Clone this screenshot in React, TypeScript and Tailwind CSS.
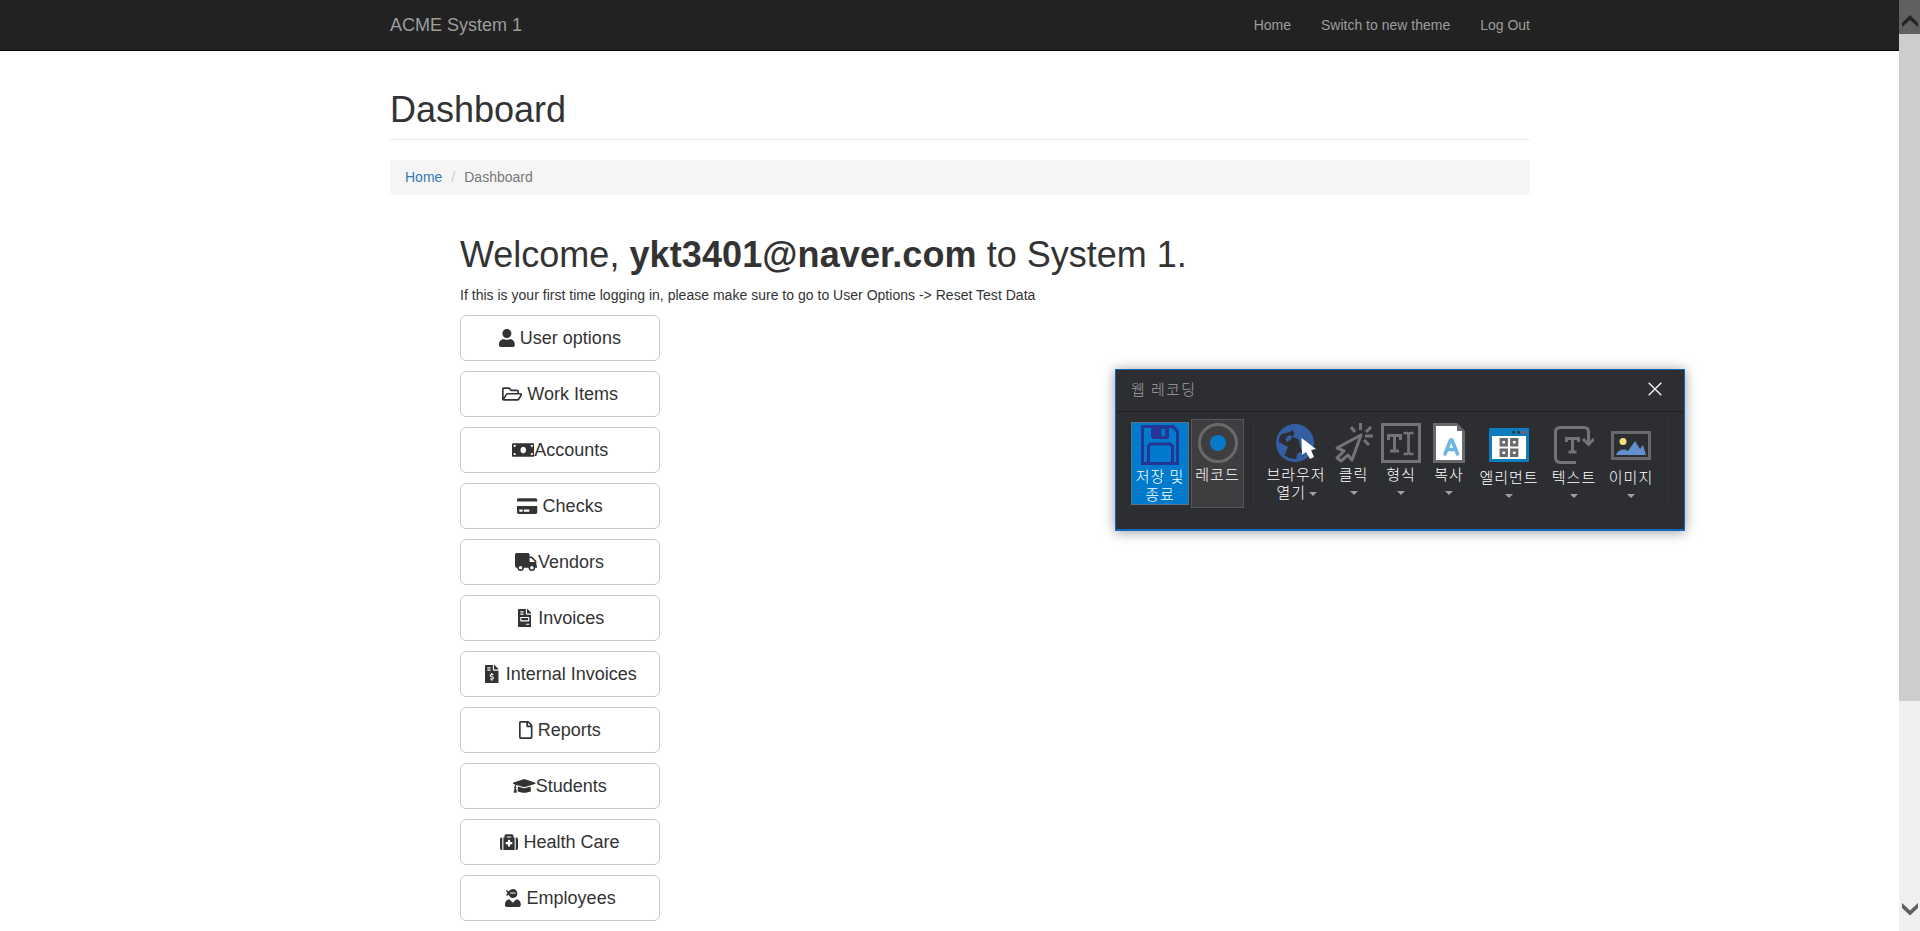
import type { ReactNode } from 'react';
import type { IconType } from 'react-icons';
import {
  FaUser,
  FaRegFolderOpen,
  FaMoneyBill,
  FaCreditCard,
  FaTruck,
  FaFileInvoice,
  FaFileInvoiceDollar,
  FaRegFile,
  FaGraduationCap,
  FaMedkit,
  FaUserNinja,
} from 'react-icons/fa';

type MenuEntry = { label: string; icon: IconType; iconClass: string };

const menu: MenuEntry[] = [
  { label: 'User options', icon: FaUser, iconClass: 'w-[15.75px] mr-[5px]' },
  { label: 'Work Items', icon: FaRegFolderOpen, iconClass: 'w-[20.25px] mr-[5px]' },
  { label: 'Accounts', icon: FaMoneyBill, iconClass: 'w-[22.5px]' },
  { label: 'Checks', icon: FaCreditCard, iconClass: 'w-[20.25px] mr-[5px]' },
  { label: 'Vendors', icon: FaTruck, iconClass: 'w-[22.5px] -ml-px mr-[0.5px]' },
  { label: 'Invoices', icon: FaFileInvoice, iconClass: 'w-[13.5px] ml-[2px] mr-[7px]' },
  { label: 'Internal Invoices', icon: FaFileInvoiceDollar, iconClass: 'w-[13.5px] ml-[2px] mr-[7px]' },
  { label: 'Reports', icon: FaRegFile, iconClass: 'w-[13.5px] mr-[5px]' },
  { label: 'Students', icon: FaGraduationCap, iconClass: 'w-[22.5px]' },
  { label: 'Health Care', icon: FaMedkit, iconClass: 'w-[18px] mr-[5px]' },
  { label: 'Employees', icon: FaUserNinja, iconClass: 'w-[15.75px] ml-[1px] mr-[5.5px]' },
];

function Navbar() {
  return (
    <nav className="h-[51px] w-full border-b border-[#080808] bg-[#222]">
      <div className="mx-auto flex h-[50px] w-[1140px] items-center justify-between text-[#9d9d9d]">
        <a className="text-[18px] leading-5">ACME System 1</a>
        <div className="flex gap-[30px] text-sm leading-5">
          <a>Home</a>
          <a>Switch to new theme</a>
          <a>Log Out</a>
        </div>
      </div>
    </nav>
  );
}

function MenuButton({ entry }: { entry: MenuEntry }) {
  const Icon = entry.icon;
  return (
    <button className="flex h-[46px] w-[200px] items-center justify-center rounded-md border border-[#ccc] bg-white text-[18px] leading-6 whitespace-nowrap text-[#333]">
      <Icon className={'h-[18px] shrink-0 ' + entry.iconClass} />
      {entry.label}
    </button>
  );
}

function Arrow({ className = '' }: { className?: string }) {
  return (
    <svg className={className} width="8" height="4" viewBox="0 0 8 4">
      <path d="M0 0H8L4 4Z" fill="#a0a0a2" />
    </svg>
  );
}

function Tool({ className, labelClass, label, children }: { className: string; labelClass: string; label: string; children: ReactNode }) {
  return (
    <div className={'flex shrink-0 flex-col items-center ' + className}>
      {children}
      <div className={'h-[18px] whitespace-nowrap ' + labelClass}>{label}</div>
      <Arrow className="mt-[8px]" />
    </div>
  );
}

function Recorder() {
  return (
    <div className="absolute top-[369px] left-[1115px] h-[162px] w-[570px] border border-b-2 border-[#1267bd] bg-[#2d2e32] font-['Noto_Sans_CJK_KR','Noto_Sans_CJK_SC',sans-serif] text-[15px] leading-[18px] font-light tracking-[1px] text-white shadow-[0_1px_12px_rgba(0,0,0,0.4)]">
      <div className="flex h-[42px] items-center justify-between border-b border-[#232323] pr-[22px] pl-[15px]">
        <span className="pb-[4px] tracking-[1.4px] text-[#a0a0a0]">웹 레코딩</span>
        <svg className="mb-[3px]" width="14" height="14" viewBox="0 0 14 14" fill="none" stroke="#f4f4f4" strokeWidth="1.4">
          <path d="M.7.7 13.3 13.3M13.3.7.7 13.3" />
        </svg>
      </div>
      <div className="flex items-start pt-[7px] pl-[15px]">
        <div className="mt-[3px] flex h-[83px] w-[58px] flex-col items-center border border-[#5d7488] bg-[#007acc] pt-[2px]">
          <svg width="38" height="40" viewBox="0 0 38 40" fill="none" stroke="#253594" strokeWidth="3">
            <path d="M1.5 1.5H32L36.5 6.5V38.500H1.500Z" />
            <path d="M7.500 38V21L9.500 19H29L31.500 21V38" />
            <path d="M10 1H28V13L27 14H12L10 12Z" fill="#253594" stroke="none" />
            <path d="M20.500 4H24V11H20.500Z" fill="#007acc" stroke="none" />
          </svg>
          <div className="mt-[2px] whitespace-nowrap">저장 및</div>
          <div className="whitespace-nowrap">종료</div>
        </div>
        <div className="ml-[2px] flex h-[89px] w-[53px] flex-col items-center border border-[#55565b] bg-[#3e3e40] pt-[3px]">
          <svg width="40" height="40" viewBox="0 0 40 40">
            <circle cx="20" cy="20" r="18.500" fill="none" stroke="#69696b" strokeWidth="3" />
            <circle cx="20" cy="20" r="8" fill="#0879c9" />
          </svg>
          <div className="mt-[2px] whitespace-nowrap">레코드</div>
        </div>
        <div className="ml-[9px] h-[85px] w-px bg-[#35363a]" />
        <div className="ml-[11px] flex w-[62px] flex-col items-center pt-[4px]">
          <svg width="40" height="40" viewBox="0 0 40 40">
            <circle cx="19" cy="20" r="19" fill="#345fa3" />
            <path
              d="M4 13 6 11 10 10 14 9 16 7 18 9 18 12 16 14 20 15 23 17 24 23 26 28 28 30 27 34 20 36 13 35 8 32 4 27 3 21 3 16Z"
              fill="#2d2e32"
            />
            <path d="M2 19 5 20 8 22 12 24 10 28 9 32 5 30 2 25ZM12 13 15 12 16 15 14 17 11 19 9 16ZM21 31 24 29 27 31 26 36 20 37Z" fill="#345fa3" />
            <path d="M25.500 15 26 32 30 29 34 36 38 34 35 27 40 26Z" fill="#fff" />
          </svg>
          <div className="mt-[2px] whitespace-nowrap">브라우저</div>
          <div className="flex items-center gap-[3px] self-end pr-[10px] whitespace-nowrap">
            열기<Arrow className="mt-[3px]" />
          </div>
        </div>
        <Tool className="ml-[6px] w-[41px] pt-[4px]" labelClass="mt-[2px]" label="클릭">
          <svg width="38" height="40" viewBox="0 0 38 40" fill="none" stroke="#747477" strokeWidth="3">
            <path d="M26 12 2 25 9 28 2 35 6 38 13 32 17 37Z" strokeLinejoin="round" />
            <path d="M25.500 0V7M16 4 20 9M36 4 31 9M30 13H38M29 17 34 22" />
          </svg>
        </Tool>
        <Tool className="ml-[7px] w-[40px] pt-[4px]" labelClass="mt-[2px]" label="형식">
          <svg width="40" height="40" viewBox="0 0 40 40" fill="none" stroke="#747477" strokeWidth="3">
            <path d="M1.500 1.500H38.500V38.500H1.500Z" />
            <path d="M7.500 17V12.500H19.500V17M13.500 12V28M9 28H18" strokeWidth="3" />
            <path d="M22.500 10H26L27.500 11.500 29 10H32.500M27.500 11V29M22.500 31H26L27.500 29.500 29 31H32.500" strokeWidth="2.700" />
          </svg>
        </Tool>
        <Tool className="ml-[8px] w-[40px] pt-[4px]" labelClass="mt-[2px]" label="복사">
          <svg width="32" height="40" viewBox="0 0 32 40">
            <path d="M0 0H24L32 8V40H0Z" fill="#68696b" />
            <path d="M3 3H24V8H29V37H3Z" fill="#fff" />
            <path d="M12 31 17.500 17H19L24.500 31M14 26.500H23" fill="none" stroke="#6db6df" strokeWidth="3.500" strokeLinecap="round" strokeLinejoin="round" />
          </svg>
        </Tool>
        <Tool className="ml-[9px] w-[62px] pt-[9px]" labelClass="mt-[6px]" label="엘리먼트">
          <svg width="40" height="34" viewBox="0 0 40 34">
            <rect width="40" height="34" rx="1" fill="#0d7dbd" />
            <path d="M3 8H37V31H3Z" fill="#fff" />
            <circle cx="24.500" cy="4.200" r="1.500" fill="#293642" />
            <circle cx="29.500" cy="4.200" r="1.500" fill="#293642" />
            <circle cx="34.500" cy="4.200" r="1.600" fill="#dc3d54" />
            <path d="M12 11.500H17.500V17H12ZM22.500 11.500H28V17H22.500ZM12 22H17.500V27.500H12ZM22.500 22H28V27.500H22.500Z" fill="none" stroke="#68696b" strokeWidth="2.800" />
          </svg>
        </Tool>
        <Tool className="ml-[9px] w-[50px] pt-[7px]" labelClass="mt-[4px]" label="텍스트">
          <svg width="40" height="38" viewBox="0 0 40 38" fill="none" stroke="#747477" strokeWidth="3">
            <path d="M22 36.500H6.500Q1.500 36.500 1.500 31V6Q1.500 1.500 6.500 1.500H30Q34.500 1.500 34.500 6V17" />
            <path d="M29 13 34.500 18.500 40 13" />
            <path d="M12.500 16V12.500H24.500V16M18.500 13V26M14.500 26H22.500" />
          </svg>
        </Tool>
        <Tool className="ml-[7px] w-[50px] pt-[12px]" labelClass="mt-[8px]" label="이미지">
          <svg width="40" height="29" viewBox="0 0 40 29">
            <rect x="1.500" y="1.500" width="37" height="26" fill="none" stroke="#68696b" strokeWidth="3" />
            <circle cx="12" cy="10.500" r="3.500" fill="#f3df7d" />
            <path d="M5 24Q7 18 14 18.500L17 20 24 10 29 18 32 14 35 24Z" fill="#628fcd" />
          </svg>
        </Tool>
        <div className="ml-[12px] h-[85px] w-px bg-[#35363a]" />
      </div>
    </div>
  );
}

function Scrollbar() {
  return (
    <div className="flex h-[931px] w-[21px] shrink-0 flex-col bg-[#f0f0f0]">
      <div className="flex h-[34px] items-start justify-center bg-[#606060] pt-[15px]">
        <svg width="16" height="12" viewBox="0 0 16 12">
          <path d="M8 0 16 8V12L8 5 0 12V8Z" fill="#222" />
        </svg>
      </div>
      <div className="h-[667px] bg-[#cdcdcd]" />
      <div className="mt-auto flex h-[29px] items-start justify-center">
        <svg className="mt-[1px]" width="16" height="13" viewBox="0 0 16 13">
          <path d="M0 0 8 7.500 16 0V5L8 12.500 0 5Z" fill="#606060" />
        </svg>
      </div>
    </div>
  );
}

export default function App() {
  return (
    <div className="relative flex h-[931px] w-full overflow-hidden bg-white font-['Liberation_Sans',Arial,sans-serif] text-sm leading-5 text-[#333]">
      <div className="flex-1">
        <div className="w-[1920px]">
          <Navbar />
          <main className="mx-auto w-[1140px] pt-[39px]">
            <div className="h-[50px] border-b border-[#eee]">
              <h1 className="text-[36px] leading-[40px] font-medium">Dashboard</h1>
            </div>
            <div className="mt-5 flex h-[35px] items-start rounded bg-[#f5f5f5] px-[15px] pt-[7px]">
              <a className="text-[#337ab7]">Home</a>
              <span className="px-[9px] text-[#ccc]">/</span>
              <span className="text-[#777]">Dashboard</span>
            </div>
            <section className="mt-10 pl-[70px]">
              <h1 className="text-[36px] leading-[40px] font-medium">
                Welcome, <strong className="tracking-[0.12px]">ykt3401@naver.com</strong> to System 1.
              </h1>
              <p className="mt-[10px] mb-[10px] tracking-[0.018px]">If this is your first time logging in, please make sure to go to User Options -&gt; Reset Test Data</p>
              <div className="flex flex-col gap-[10px]">
                {menu.map((entry) => (
                  <MenuButton key={entry.label} entry={entry} />
                ))}
              </div>
            </section>
          </main>
        </div>
      </div>
      <div className="absolute top-0 right-0">
        <Scrollbar />
      </div>
      <Recorder />
    </div>
  );
}
